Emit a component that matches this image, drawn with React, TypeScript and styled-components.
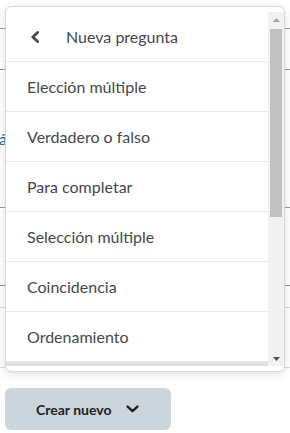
import styled, { createGlobalStyle } from 'styled-components';

const GlobalStyle = createGlobalStyle`
  html, body {
    margin: 0;
    padding: 0;
    background: #fff;
    font-family: Lato, "Noto Sans", sans-serif;
    overflow: hidden;
  }
`;

const Page = styled.div`
  position: relative;
  width: 290px;
  height: 433px;
  overflow: hidden;
`;

const Backdrop = styled.div`
  display: flex;
  flex-direction: column;
`;

const BackRow = styled.div<{ h: number; line: string }>`
  height: ${p => p.h - 1}px;
  border-bottom: 1px solid ${p => p.line};
  display: flex;
  align-items: center;
`;

const LinkText = styled.span`
  font-size: 16px;
  color: #006fbf;
  margin-left: -1px;
`;

const Dropdown = styled.div`
  position: absolute;
  top: 6px;
  left: 5px;
  width: 280px;
  height: 366px;
  background: #fff;
  border: 1px solid #d3d9e3;
  border-radius: 6px;
  box-shadow: 0 2px 10px rgba(0, 0, 0, 0.12);
  padding: 5px 0 5px 0;
  box-sizing: border-box;
  display: flex;
  flex-direction: column;
`;

const Body = styled.div`
  flex: 1;
  display: flex;
  min-height: 0;
`;

const List = styled.div`
  flex: 1;
  overflow: hidden;
  display: flex;
  flex-direction: column;
  position: relative;

  &::after {
    content: '';
    position: absolute;
    left: 0;
    right: 0;
    bottom: 0;
    height: 4px;
    background: linear-gradient(#e6e6e6, #dcdcdc);
  }
`;

const ScrollTrack = styled.div`
  width: 16px;
  background: #f1f1f1;
  display: flex;
  flex-direction: column;
  align-items: center;
`;

const ArrowBox = styled.div`
  height: 15px;
  width: 100%;
  display: flex;
  align-items: center;
  justify-content: center;
`;

const Thumb = styled.div`
  width: 12px;
  height: 188px;
  margin-top: 2px;
  background: #c1c1c1;
`;

const Spacer = styled.div`
  flex: 1;
`;

const HeaderRow = styled.div`
  height: 49px;
  flex-shrink: 0;
  border-bottom: 1px solid #e3e9f1;
  display: flex;
  align-items: center;
  padding-left: 24px;
  gap: 26px;
  color: #45484b;
  font-size: 16px;
`;

const Item = styled.div`
  height: 49px;
  flex-shrink: 0;
  border-bottom: 1px solid #e3e9f1;
  display: flex;
  align-items: center;
  padding-left: 21px;
  color: #45484b;
  font-size: 16px;
  white-space: nowrap;
`;

const CreateButton = styled.button`
  position: absolute;
  left: 5px;
  top: 388px;
  width: 166px;
  height: 42px;
  border: none;
  border-radius: 6px;
  background: #cdd5dc;
  color: #202122;
  font-family: Lato, "Noto Sans", sans-serif;
  font-weight: 700;
  font-size: 14px;
  display: flex;
  align-items: center;
  padding: 0 0 0 31px;
  gap: 15px;
`;

const ITEMS = [
  'Elección múltiple',
  'Verdadero o falso',
  'Para completar',
  'Selección múltiple',
  'Coincidencia',
  'Ordenamiento',
];

const BACK_ROWS = [
  { h: 29, line: '#9a9a9a' },
  { h: 41, line: '#9a9a9a' },
  { h: 138, line: '#9a9a9a', text: 'á' },
  { h: 78, line: '#8c8c8c' },
  { h: 22, line: '#d7dbe0' },
  { h: 60, line: '#d7dbe0' },
];

export default function App() {
  return (
    <Page>
      <GlobalStyle />
      <Backdrop>
        {BACK_ROWS.map((r, i) => (
          <BackRow key={i} h={r.h} line={r.line}>
            {r.text && <LinkText>{r.text}</LinkText>}
          </BackRow>
        ))}
      </Backdrop>

      <Dropdown>
        <Body>
          <List>
            <HeaderRow>
              <svg width="10" height="12" viewBox="0 0 10 12">
                <path d="M7.6 1.4 L2.8 6 L7.6 10.6" fill="none" stroke="#494c4e" strokeWidth="2.8" strokeLinecap="round" strokeLinejoin="round" />
              </svg>
              <span>Nueva pregunta</span>
            </HeaderRow>
            {ITEMS.map(t => (
              <Item key={t}>{t}</Item>
            ))}
          </List>
          <ScrollTrack>
            <ArrowBox>
              <svg width="7" height="4" viewBox="0 0 7 4">
                <polygon points="0,4 3.5,0 7,4" fill="#a3a3a3" />
              </svg>
            </ArrowBox>
            <Thumb />
            <Spacer />
            <ArrowBox>
              <svg width="7" height="4" viewBox="0 0 7 4">
                <polygon points="0,0 7,0 3.5,4" fill="#505050" />
              </svg>
            </ArrowBox>
          </ScrollTrack>
        </Body>
      </Dropdown>

      <CreateButton>
        <span>Crear nuevo</span>
        <svg width="13" height="8" viewBox="0 0 13 8">
          <path d="M1.6 1.6 L6.5 6.2 L11.4 1.6" fill="none" stroke="#202122" strokeWidth="2.4" strokeLinecap="round" strokeLinejoin="round" />
        </svg>
      </CreateButton>
    </Page>
  );
}
